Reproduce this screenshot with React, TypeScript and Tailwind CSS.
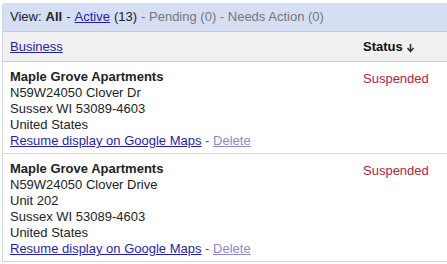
const rows = [
  {
    name: 'Maple Grove Apartments',
    lines: ['N59W24050 Clover Dr', 'Sussex WI 53089-4603', 'United States'],
  },
  {
    name: 'Maple Grove Apartments',
    lines: ['N59W24050 Clover Drive', 'Unit 202', 'Sussex WI 53089-4603', 'United States'],
  },
]

export default function App() {
  return (
    <div className="w-[447px] h-[264px] overflow-hidden bg-white pt-[3px] pl-[2px] text-[13px] leading-[16px] text-[#222] font-['Liberation_Sans',Arial,sans-serif]">
      <div className="border-l border-b border-[#cfd6e4] rounded-tl-[4px] overflow-hidden">
        <div className="h-[29px] bg-[#d6def3] flex items-center px-[7px] border-b border-[#c6cbd6]">
          <span>View: </span>
          <span className="font-bold ml-[4px]">All</span>
          <span className="ml-[4px]">-</span>
          <a className="ml-[4px] text-[#1f1fa8] underline cursor-pointer">Active</a>
          <span className="ml-[4px]">(13)</span>
          <span className="ml-[4px] text-[#777]">- Pending (0) - Needs Action (0)</span>
        </div>
        <div className="h-[30px] bg-[#f0f0f0] flex items-center border-b border-[#cccccc]">
          <div className="flex-1 px-[7px]">
            <a className="text-[#1f1fa8] underline cursor-pointer">Business</a>
          </div>
          <div className="w-[91px] px-[7px] font-bold text-[#111] flex items-center gap-[3px]">
            Status
            <svg width="9" height="10" viewBox="0 0 9 10" className="mt-[2px]">
              <path d="M4.5 1v7M1.5 5l3 3.5 3-3.5" stroke="#333" strokeWidth="1.6" fill="none" />
            </svg>
          </div>
        </div>
        {rows.map((r, i) => (
          <div key={i} className="flex border-b border-[#d4d4d4] last:border-b-0 pt-[7px] pb-[4px]">
            <div className="flex-1 px-[7px]">
              <div className="font-bold">{r.name}</div>
              {r.lines.map((l, j) => (
                <div key={j}>{l}</div>
              ))}
              <div>
                <a className="text-[#1f1fa8] underline cursor-pointer">Resume display on Google Maps</a>
                <span className="text-[#555]"> - </span>
                <a className="text-[#8a8acc] underline cursor-pointer">Delete</a>
              </div>
            </div>
            <div className="w-[91px] px-[7px] pt-[2px] text-[#b0263e]">Suspended</div>
          </div>
        ))}
      </div>
    </div>
  )
}
